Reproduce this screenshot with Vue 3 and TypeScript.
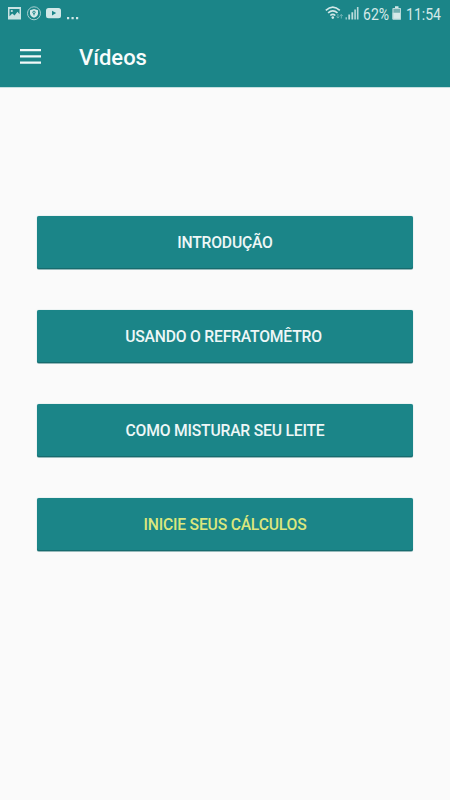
<script setup lang="ts">
interface VideoAction {
  label: string
  highlight?: boolean
  trailing?: boolean
}

const actions: VideoAction[] = [
  { label: 'INTRODUÇÃO' },
  { label: 'USANDO O REFRATOMÊTRO', trailing: true },
  { label: 'COMO MISTURAR SEU LEITE' },
  { label: 'INICIE SEUS CÁLCULOS', highlight: true },
]
</script>

<template>
  <div class="screen">
    <header class="header">
      <div class="status">
        <svg class="notices" width="90" height="28" viewBox="0 0 90 28">
          <path fill="#c9e3e3" fill-rule="evenodd" d="M8 7h13v12.500H8zM9.500 9v7.200l2.800-2.700 2.200 2 3-3.800 2 2.500V9z" />
          <circle cx="11.800" cy="11" r="1.100" fill="#c9e3e3" />
          <circle cx="34" cy="13.300" r="6.500" fill="none" stroke="#a5cfd0" />
          <path fill="#d5e9e9" d="M34 9l4 1.300v3.200q0 2.800-4 4.300-4-1.500-4-4.300v-3.200z" />
          <circle cx="34" cy="12.300" r="1.200" fill="none" stroke="#1b8588" />
          <path d="M34 13.400v2" stroke="#1b8588" />
          <rect x="46" y="8" width="15" height="10.200" rx="2.500" fill="#d2e8e8" />
          <path d="M52 10.800l4.200 2.300-4.200 2.400z" fill="#1b8588" />
          <path d="M67 17h2.200v2.200h-2.200zM71.500 17h2.200v2.200h-2.200zM76 17h2.200v2.200H76z" fill="#d2e8e8" />
        </svg>
        <div class="system">
          <svg class="signals" width="36" height="28" viewBox="0 0 36 28">
            <g fill="none" stroke="#d2e8e8" stroke-width="1.600">
              <path d="M.8 10.300q7-6.500 14 0" />
              <path d="M3.100 12.900q4.700-4.200 9.400 0" />
              <path d="M5.300 15.500q2.500-2.200 5 0" />
            </g>
            <circle cx="7.800" cy="17.600" r="1.300" fill="#d2e8e8" />
            <path fill="none" stroke="#70b2b4" d="M12.900 14v4M11.500 16.500l1.400 1.600 1.400-1.600M16.300 18.500v-4M14.900 16l1.400-1.600 1.400 1.600" />
            <path fill="#8ec4c5" d="M20.500 17.300h1.500v2.300h-1.500z" />
            <path fill="#bddddd" d="M23.300 14.500h1.800v5.100h-1.800zM26.400 12.200h1.800v7.400h-1.800z" />
            <path fill="#b8d9da" d="M29.300 9.400h1.600v10.200h-1.600zM31.900 7h1.600v12.600h-1.600z" />
          </svg>
          <span class="percent"><span>62%</span></span>
          <svg class="battery" width="10" height="28" viewBox="0 0 10 28">
            <path fill="#72afb1" d="M.5 8h8.500v5H.5z" />
            <path fill="#d5e9e9" d="M3 6.300h3.500V8H3zM.5 12.800h8.500v6.800H.5z" />
            <path fill="none" stroke="#b7d8d9" d="M1 8.500h7.500v10.600H1z" />
          </svg>
          <span class="clock"><span>11:54</span></span>
        </div>
      </div>
      <div class="toolbar">
        <svg class="menu" width="22" height="16" viewBox="0 0 22 16">
          <path fill="#f1f8f8" d="M0 0h21v2.200H0zM0 6.300h21v2.200H0zM0 12.600h21v2.200H0z" />
        </svg>
        <h1>Vídeos</h1>
      </div>
    </header>
    <main class="actions">
      <button
        v-for="action in actions"
        :key="action.label"
        type="button"
        class="action"
        :class="{ highlight: action.highlight, trailing: action.trailing }"
      >{{ action.label }}</button>
    </main>
  </div>
</template>

<style>
body {
  margin: 0;
}
</style>

<style scoped>
.screen {
  width: 450px;
  height: 800px;
  overflow: hidden;
  background: #fafafa;
  font-family: Roboto, sans-serif;
}

.header {
  height: 87px;
  background: #1b8588;
  box-shadow: 0 1px 0 #c5dfe0;
}

.status {
  display: flex;
  justify-content: space-between;
  height: 28px;
  color: #d5e9e9;
  font-size: 16.500px;
  line-height: 29px;
}

.status svg {
  display: block;
  flex: none;
}

.system {
  display: flex;
  width: 125px;
}

.percent {
  width: 25px;
  margin-left: 1.500px;
}

.percent span,
.clock span {
  display: inline-block;
  transform: scaleX(0.85);
  transform-origin: left;
}

.battery {
  margin-left: 4.500px;
}

.clock {
  width: 36px;
  margin-left: 4px;
}

.toolbar {
  display: flex;
  align-items: center;
  height: 59px;
  padding-left: 20px;
}

.menu {
  margin-top: -1px;
}

h1 {
  margin: 0 0 0 37px;
  color: #f8fcfc;
  font-size: 22px;
  font-weight: 500;
  line-height: 30px;
}

.actions {
  display: flex;
  flex-direction: column;
  gap: 41px;
  padding: 129px 37px 0;
}

.action {
  height: 53px;
  padding: 0;
  border: 0;
  border-radius: 2px;
  background: #1b8588;
  box-shadow: inset 0 -1px 0 #176b6e, 0 0 1px #1b858899, 0 1px 0 #9fbdbe;
  color: #eef7f7;
  font: 500 15.700px/53px Roboto, sans-serif;
  letter-spacing: -0.2px;
}

.trailing {
  padding-right: 3px;
}

.highlight {
  color: #dbe77d;
}
</style>
